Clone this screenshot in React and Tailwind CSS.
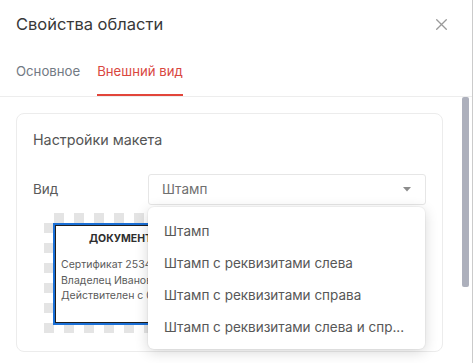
const options = [
  "Штамп",
  "Штамп с реквизитами слева",
  "Штамп с реквизитами справа",
  "Штамп с реквизитами слева и спр...",
];

function CloseIcon() {
  return (
    <svg width="11" height="11" viewBox="0 0 11 11" fill="none" stroke="#9a9a9a" strokeWidth="1.3" strokeLinecap="round">
      <path d="M0.7 0.7l9.6 9.6M10.3 0.7l-9.6 9.6" />
    </svg>
  );
}

function StampPreview() {
  return (
    <div className="ml-[11px] mt-2 h-[120px] w-[228px] bg-[conic-gradient(#e4e4e4_25%,transparent_0_50%,#e4e4e4_0_75%,transparent_0)] bg-[length:20px_20px] pl-[9px] pt-[10px]">
      <div className="h-[102px] w-[200px] border-2 border-[#1a6fd6] bg-white pl-[6px] pt-[7px] shadow-[inset_0_0_0_1px_#1f1f1f]">
        <div className="pl-[28px] text-[10.5px] font-bold leading-[14px] text-[#2e2e2e] whitespace-nowrap">
          ДОКУМЕНТ ПОДПИСАН
        </div>
        <div className="mt-[11px] text-[10.5px] leading-[15.5px] text-[#5a5a5a] whitespace-nowrap">
          <p>Сертификат 25340000000000000000</p>
          <p>Владелец Иванов Иван Иванович</p>
          <p>Действителен с 01.01.2024 по 01.01.2025</p>
        </div>
      </div>
    </div>
  );
}

function Select() {
  return (
    <div className="relative flex-1">
      <div className="flex h-[31px] items-center justify-between rounded-[3px] border border-[#e6e6e6] bg-white pl-[13px] pr-[14px]">
        <span className="text-[13.5px] text-[#707070]">Штамп</span>
        <svg width="8" height="5" viewBox="0 0 8 5">
          <path d="M0 0h8L4 4.5z" fill="#8c8c8c" />
        </svg>
      </div>
      <div className="absolute left-0 right-[1px] top-[33px] z-10 rounded-md bg-white pb-[6px] pt-2 shadow-[0_3px_14px_rgba(0,0,0,0.16),0_0_0_1px_rgba(0,0,0,0.03)]">
        {options.map((o) => (
          <div key={o} className="flex h-8 items-center pl-4 text-[13.5px] text-[#575757] whitespace-nowrap">
            {o}
          </div>
        ))}
      </div>
    </div>
  );
}

export default function App() {
  return (
    <div className="flex h-[363px] w-[473px] flex-col overflow-hidden border-r border-[#cbcbcb] bg-white font-['Inter',sans-serif]">
      <div className="flex h-12 shrink-0 items-center justify-between pl-4 pr-[25px]">
        <h1 className="text-[16.5px] text-[#383838]">Свойства области</h1>
        <CloseIcon />
      </div>

      <div className="flex h-[49px] shrink-0 gap-[17px] border-b border-[#ededed] px-4">
        <div className="flex items-center text-[13.2px] text-[#727a84]">Основное</div>
        <div className="relative flex items-center text-[13.2px] text-[#d9473f]">
          Внешний вид
          <span className="absolute bottom-0 left-0 right-0 h-[2px] bg-[#e2453a]" />
        </div>
      </div>

      <div className="flex min-h-0 flex-1">
        <div className="flex-1 px-4 pt-4">
          <div className="rounded-lg border border-[#ececec] px-4 pb-[18px] pt-4">
            <h2 className="text-[14.3px] leading-5 text-[#555]">Настройки макета</h2>
            <div className="mt-6 flex items-center">
              <span className="w-[115px] text-[13.5px] text-[#5a5a5a]">Вид</span>
              <Select />
            </div>
            <StampPreview />
          </div>
        </div>
        <div className="w-[13px] shrink-0 pl-[3px]">
          <div className="h-[190px] w-[7px] rounded-[2px] bg-[#adb0bc]" />
        </div>
      </div>
    </div>
  );
}
